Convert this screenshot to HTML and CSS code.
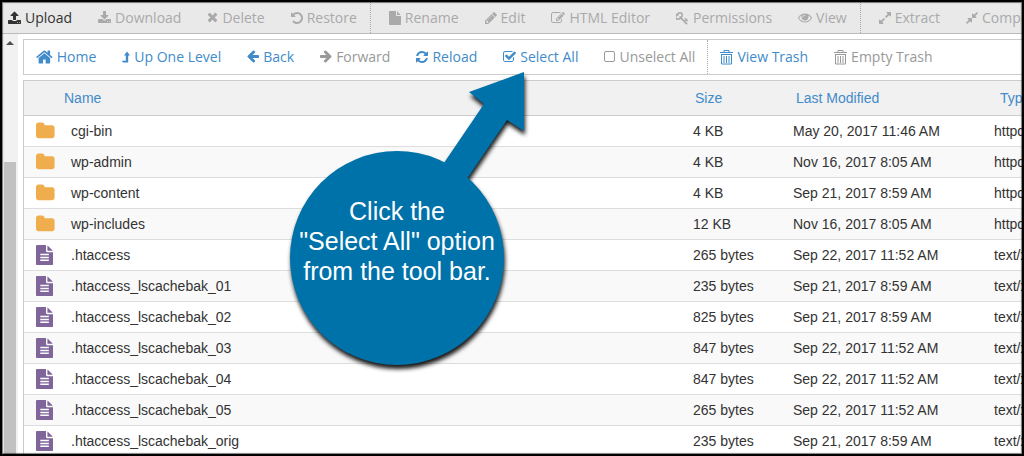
FILE: index.html
```html
<!DOCTYPE html>
<html lang="en">

<head>
    <meta charset="UTF-8">
    <meta name="viewport" content="width=device-width, initial-scale=1.0">
    <title>File Manager</title>
    <link rel="stylesheet" href="styles.css">
</head>

<body>
    <!-- shared icon shapes -->
    <svg class="sprite" aria-hidden="true">
        <path id="i-folder" d="M1728 608v704q0 92-66 158t-158 66h-1216q-92 0-158-66t-66-158v-960q0-92 66-158t158-66h320q92 0 158 66t66 158v32h672q92 0 158 66t66 158z"/>
        <path id="i-doc" d="M1596 476q14 14 28 36h-472v-472q22 14 36 28zm-476 164h544v1056q0 40-28 68t-68 28h-1344q-40 0-68-28t-28-68v-1600q0-40 28-68t68-28h800v544q0 40 28 68t68 28zM512 790v130h768v-130zM512 1050v130h768v-130zM512 1310v130h768v-130z"/>
        <path id="i-arrow" d="M1664 896v128q0 53-32.5 90.5t-84.5 37.5h-704l293 294q38 36 38 90t-38 90l-75 76q-37 37-90 37-52 0-91-37l-651-652q-37-37-37-90 0-52 37-91l651-650q38-38 91-38 52 0 90 38l75 74q38 38 38 91t-38 91l-293 293h704q52 0 84.5 37.5t32.5 90.5z"/>
        <g id="i-trash">
            <path d="M4 2V.5h5V2M0 2.5h13M1 4.5h11M1.500 4.500v9.500h10V4.500M4 6v7M6.500 6v7M9 6v7" fill="none" stroke="currentColor"/>
        </g>
    </svg>

    <nav class="actions">
        <div class="group">
            <button class="tool dark"><svg class="icon" viewBox="64 0 1664 1792"><path d="M1344 1472q0-26-19-45t-45-19-45 19-19 45 19 45 45 19 45-19 19-45zm256 0q0-26-19-45t-45-19-45 19-19 45 19 45 45 19 45-19 19-45zm128-224v320q0 40-28 68t-68 28h-1472q-40 0-68-28t-28-68v-320q0-40 28-68t68-28h427q21 56 70.5 92t110.5 36h256q61 0 110.5-36t70.5-92h427q40 0 68 28t28 68zm-325-648q-17 40-59 40h-256v448q0 26-19 45t-45 19h-256q-26 0-45-19t-19-45v-448h-256q-42 0-59-40-17-39 14-69l448-448q18-19 45-19t45 19l448 448q31 30 14 69z"/></svg>Upload</button>
            <button class="tool" disabled><svg class="icon" viewBox="64 0 1664 1792"><path d="M1344 1344q0-26-19-45t-45-19-45 19-19 45 19 45 45 19 45-19 19-45zm256 0q0-26-19-45t-45-19-45 19-19 45 19 45 45 19 45-19 19-45zm128-224v320q0 40-28 68t-68 28h-1472q-40 0-68-28t-28-68v-320q0-40 28-68t68-28h465l135 136q58 56 136 56t136-56l136-136h464q40 0 68 28t28 68zm-325-569q17 41-14 70l-448 448q-18 19-45 19t-45-19l-448-448q-31-29-14-70 17-39 59-39h256v-448q0-26 19-45t45-19h256q26 0 45 19t19 45v448h256q42 0 59 39z"/></svg>Download</button>
            <button class="tool" disabled><svg class="icon" viewBox="192 128 1408 1792"><path d="M1490 1322q0 40-28 68l-136 136q-28 28-68 28t-68-28l-294-294-294 294q-28 28-68 28t-68-28l-136-136q-28-28-28-68t28-68l294-294-294-294q-28-28-28-68t28-68l136-136q28-28 68-28t68 28l294 294 294-294q28-28 68-28t68 28l136 136q28 28 28 68t-28 68l-294 294 294 294q28 28 28 68z"/></svg>Delete</button>
            <button class="tool" disabled><svg class="icon" viewBox="128 0 1536 1792"><path d="M1664 896q0 156-61 298t-164 245-245 164-298 61q-172 0-327-72.5t-264-204.5q-7-10-6.500-22.500t8.500-20.500l137-138q10-9 25-9 16 2 23 12 73 95 179 147t225 52q104 0 198.500-40.500t163.500-109.500 109.500-163.500 40.500-198.500-40.500-198.500-109.500-163.500-163.500-109.500-198.500-40.500q-98 0-188 35.500t-160 101.500l137 138q31 30 14 69-17 40-59 40h-448q-26 0-45-19t-19-45v-448q0-42 40-59 39-17 69 14l130 129q107-101 244.500-156.500t284.500-55.500q156 0 298 61t245 164 164 245 61 298z"/></svg>Restore</button>
        </div>
        <div class="group">
            <button class="tool" disabled><svg class="icon" viewBox="128 0 1536 1792"><path d="M1152 512v-472q22 14 36 28l408 408q14 14 28 36h-472zm-128 32q0 40 28 68t68 28h544v1056q0 40-28 68t-68 28h-1344q-40 0-68-28t-28-68v-1600q0-40 28-68t68-28h800v544z"/></svg>Rename</button>
            <button class="tool" disabled><svg class="icon" viewBox="128 0 1536 1792"><path d="M491 1536l91-91-235-235-91 91v107h128v128h107zm523-928q0-22-22-22-10 0-17 7l-542 542q-7 7-7 17 0 22 22 22 10 0 17-7l542-542q7-7 7-17zm-54-192l416 416-832 832h-416v-416zm683 96q0 53-37 90l-166 166-416-416 166-165q36-38 90-38 53 0 91 38l235 234q37 39 37 91z"/></svg>Edit</button>
            <button class="tool" disabled><svg class="icon" viewBox="0 0 1792 1792"><path d="M888 1184l116-116-152-152-116 116v56h96v96h56zm440-720q-16-16-33 1l-350 350q-17 17-1 33t33-1l350-350q17-17 1-33zm80 594v190q0 119-84.5 203.5t-203.5 84.5h-832q-119 0-203.5-84.5t-84.5-203.5v-832q0-119 84.5-203.5t203.5-84.5h832q63 0 117 25 15 7 18 23 3 17-9 29l-49 49q-14 14-32 8-23-6-45-6h-832q-66 0-113 47t-47 113v832q0 66 47 113t113 47h832q66 0 113-47t47-113v-126q0-13 9-22l64-64q15-15 35-7t20 29zm-96-738l288 288-672 672h-288v-288zm444 132l-92 92-288-288 92-92q28-28 68-28t68 28l152 152q28 28 28 68t-28 68z"/></svg>HTML Editor</button>
            <button class="tool" disabled><svg class="icon" viewBox="128 0 1664 1792"><path d="M832 512q0-80-56-136t-136-56-136 56-56 136q0 42 19 83-41-19-83-19-80 0-136 56t-56 136 56 136 136 56 136-56 56-136q0-42-19-83 41 19 83 19 80 0 136-56t56-136zm851 704q0 17-49 66t-66 49q-9 0-28.5-16t-36.5-33-38.5-40-24.5-26l-96 96 220 220q28 28 28 68 0 42-39 81t-81 39q-40 0-68-28l-671-671q-176 131-365 131-163 0-265.5-102.5t-102.5-265.5q0-160 95-313t248-248 313-95q163 0 265.5 102.5t102.5 265.5q0 189-131 365l355 355 96-96q-3-3-26-24.5t-40-38.5-33-36.5-16-28.5q0-17 49-66t66-49q13 0 23 10 6 6 46 44.5t82 79.5 86.5 86 73 78 28.5 41z"/></svg>Permissions</button>
            <button class="tool" disabled><svg class="icon" viewBox="0 64 1792 1792"><path d="M1664 960q-152-236-381-353 61 104 61 225 0 185-131.5 316.5t-316.5 131.5-316.5-131.5-131.5-316.5q0-121 61-225-229 117-381 353 133 205 333.5 326.5t434.5 121.5 434.5-121.5 333.5-326.5zm-720-384q0-20-14-34t-34-14q-125 0-214.5 89.5t-89.5 214.5q0 20 14 34t34 14 34-14 14-34q0-86 61-147t147-61q20 0 34-14t14-34zm848 384q0 34-20 69-140 230-376.5 368.5t-499.5 138.5-499.5-139-376.5-368q-20-35-20-69t20-69q140-229 376.5-368t499.5-139 499.5 139 376.5 368q20 35 20 69z"/></svg>View</button>
        </div>
        <div class="group">
            <button class="tool" disabled><svg class="icon" viewBox="128 0 1536 1792"><path d="M883 1056q0 13-10 23l-332 332 144 144q19 19 19 45t-19 45-45 19h-448q-26 0-45-19t-19-45v-448q0-26 19-45t45-19 45 19l144 144 332-332q10-10 23-10t23 10l114 114q10 10 10 23zm781-864v448q0 26-19 45t-45 19-45-19l-144-144-332 332q-10 10-23 10t-23-10l-114-114q-10-10-10-23t10-23l332-332-144-144q-19-19-19-45t19-45 45-19h448q26 0 45 19t19 45z"/></svg>Extract</button>
            <button class="tool" disabled><svg class="icon" viewBox="128 0 1536 1792"><path d="M896 960v448q0 26-19 45t-45 19-45-19l-144-144-332 332q-10 10-23 10t-23-10l-114-114q-10-10-10-23t10-23l332-332-144-144q-19-19-19-45t19-45 45-19h448q26 0 45 19t19 45zm755-672q0 13-10 23l-332 332 144 144q19 19 19 45t-19 45-45 19h-448q-26 0-45-19t-19-45v-448q0-26 19-45t45-19 45 19l144 144 332-332q10-10 23-10t23 10l114 114q10 10 10 23z"/></svg>Compress</button>
        </div>
    </nav>

    <div class="main">
        <div class="scrollbar">
            <div class="scroll-up"></div>
            <div class="thumb"></div>
        </div>

        <div class="content">
            <nav class="toolbar">
                <div class="group">
                    <button class="tool blue"><svg class="icon big" viewBox="64 0 1664 1792"><path d="M1472 992v480q0 26-19 45t-45 19h-384v-384h-256v384h-384q-26 0-45-19t-19-45v-480q0-1 .5-3t.5-3l575-474 575 474q1 2 1 6zm223-69l-62 74q-8 9-21 11h-3q-13 0-21-7l-692-577-692 577q-12 8-24 7-13-2-21-11l-62-74q-8-10-7-23.5t11-21.5l719-599q32-26 76-26t76 26l244 204v-195q0-14 9-23t23-9h192q14 0 23 9t9 23v408l219 182q10 8 11 21.5t-7 23.5z"/></svg>Home</button>
                    <button class="tool blue"><svg class="icon" viewBox="0 0 8 14"><path d="M5 1.500L8 5.500H6.200V12.500H.8L0 10.800H3.800V5.500H2z"/></svg>Up One Level</button>
                    <button class="tool blue"><svg class="icon" viewBox="128 128 1536 1792"><use href="#i-arrow"/></svg>Back</button>
                    <button class="tool" disabled><svg class="icon flip" viewBox="128 128 1536 1792"><use href="#i-arrow"/></svg>Forward</button>
                    <button class="tool blue"><svg class="icon" viewBox="128 0 1536 1792"><path d="M1639 1056q0 5-1 7-64 268-268 434.5t-478 166.500q-146 0-282.500-55t-243.500-157l-129 129q-19 19-45 19t-45-19-19-45v-448q0-26 19-45t45-19h448q26 0 45 19t19 45-19 45l-137 137q71 66 161 102t187 36q134 0 250-65t186-179q11-17 53-117 8-23 30-23h192q13 0 22.500 9.500t9.500 22.500zm25-800v448q0 26-19 45t-45 19h-448q-26 0-45-19t-19-45 19-45l138-138q-148-137-349-137-134 0-250 65t-186 179q-11 17-53 117-8 23-30 23h-199q-13 0-22.500-9.500t-9.500-22.500v-7q65-268 270-434.500t480-166.500q146 0 284 55.500t245 156.500l130-129q19-19 45-19t45 19 19 45z"/></svg>Reload</button>
                    <button class="tool blue"><svg class="icon" viewBox="64 0 1664 1792"><path d="M1472 930v318q0 119-84.5 203.5t-203.5 84.5h-832q-119 0-203.5-84.5t-84.5-203.5v-832q0-119 84.5-203.5t203.5-84.5h832q63 0 117 25 15 7 18 23 3 17-9 29l-49 49q-10 10-23 10-3 0-9-2-23-6-45-6h-832q-66 0-113 47t-47 113v832q0 66 47 113t113 47h832q66 0 113-47t47-113v-254q0-13 9-22l64-64q10-10 23-10 6 0 12 3 20 8 20 29zm231-489l-814 814q-24 24-57 24t-57-24l-430-430q-24-24-24-57t24-57l110-110q24-24 57-24t57 24l263 263 647-647q24-24 57-24t57 24l110 110q24 24 24 57t-24 57z"/></svg>Select All</button>
                    <button class="tool" disabled><svg class="icon" viewBox="0 0 11 14"><rect x=".5" y="1.500" width="10" height="10" rx="1.500" fill="none" stroke="currentColor"/></svg>Unselect All</button>
                </div>
                <div class="group">
                    <button class="tool blue"><svg class="icon trash" viewBox="0 0 13 15"><use href="#i-trash"/></svg>View Trash</button>
                    <button class="tool" disabled><svg class="icon trash" viewBox="0 0 13 15"><use href="#i-trash"/></svg>Empty Trash</button>
                </div>
            </nav>

            <table class="files">
                <thead>
                    <tr><th class="col-icon"></th><th class="col-name">Name</th><th class="col-size">Size</th><th class="col-date">Last Modified</th><th class="col-type">Type</th></tr>
                </thead>
                <tbody>
                    <tr><td><svg class="file-icon folder" viewBox="64 0 1664 1792"><use href="#i-folder"/></svg></td><td class="name">cgi-bin</td><td>4 KB</td><td>May 20, 2017 11:46 AM</td><td>httpd/unix-directory</td></tr>
                    <tr><td><svg class="file-icon folder" viewBox="64 0 1664 1792"><use href="#i-folder"/></svg></td><td class="name">wp-admin</td><td>4 KB</td><td>Nov 16, 2017 8:05 AM</td><td>httpd/unix-directory</td></tr>
                    <tr><td><svg class="file-icon folder" viewBox="64 0 1664 1792"><use href="#i-folder"/></svg></td><td class="name">wp-content</td><td>4 KB</td><td>Sep 21, 2017 8:59 AM</td><td>httpd/unix-directory</td></tr>
                    <tr><td><svg class="file-icon folder" viewBox="64 0 1664 1792"><use href="#i-folder"/></svg></td><td class="name">wp-includes</td><td>12 KB</td><td>Nov 16, 2017 8:05 AM</td><td>httpd/unix-directory</td></tr>
                    <tr><td><svg class="file-icon doc" viewBox="128 0 1536 1792"><use href="#i-doc"/></svg></td><td class="name">.htaccess</td><td>265 bytes</td><td>Sep 22, 2017 11:52 AM</td><td>text/x-generic</td></tr>
                    <tr><td><svg class="file-icon doc" viewBox="128 0 1536 1792"><use href="#i-doc"/></svg></td><td class="name">.htaccess_lscachebak_01</td><td>235 bytes</td><td>Sep 21, 2017 8:59 AM</td><td>text/x-generic</td></tr>
                    <tr><td><svg class="file-icon doc" viewBox="128 0 1536 1792"><use href="#i-doc"/></svg></td><td class="name">.htaccess_lscachebak_02</td><td>825 bytes</td><td>Sep 21, 2017 8:59 AM</td><td>text/x-generic</td></tr>
                    <tr><td><svg class="file-icon doc" viewBox="128 0 1536 1792"><use href="#i-doc"/></svg></td><td class="name">.htaccess_lscachebak_03</td><td>847 bytes</td><td>Sep 22, 2017 11:52 AM</td><td>text/x-generic</td></tr>
                    <tr><td><svg class="file-icon doc" viewBox="128 0 1536 1792"><use href="#i-doc"/></svg></td><td class="name">.htaccess_lscachebak_04</td><td>847 bytes</td><td>Sep 22, 2017 11:52 AM</td><td>text/x-generic</td></tr>
                    <tr><td><svg class="file-icon doc" viewBox="128 0 1536 1792"><use href="#i-doc"/></svg></td><td class="name">.htaccess_lscachebak_05</td><td>265 bytes</td><td>Sep 22, 2017 11:52 AM</td><td>text/x-generic</td></tr>
                    <tr><td><svg class="file-icon doc" viewBox="128 0 1536 1792"><use href="#i-doc"/></svg></td><td class="name">.htaccess_lscachebak_orig</td><td>235 bytes</td><td>Sep 21, 2017 8:59 AM</td><td>text/x-generic</td></tr>
                </tbody>
            </table>
        </div>
    </div>

    <div class="callout">
        <svg class="callout-shape" viewBox="0 0 236 294">
            <circle cx="108" cy="186" r="107"/>
            <path d="M235 0L180 20 195 32 142 110 169 120 218 48 235 59z"/>
        </svg>
        <p class="callout-text">Click the<br>"Select All" option<br>from the tool bar.</p>
    </div>
</body>

</html>
```

FILE: styles.css
```css
* {
    box-sizing: border-box;
}

body {
    display: flex;
    flex-direction: column;
    position: relative;
    height: 100vh;
    margin: 0;
    border: 2px solid #000;
    overflow: hidden;
    background: #fff;
    color: #333;
    font-family: "Liberation Sans", Arial, sans-serif;
    font-size: 14px;
}

/* soft inner edge of the black frame */
body::after {
    content: "";
    position: absolute;
    inset: 0;
    box-shadow: inset 0 0 1px 1px rgba(0, 0, 0, 0.5);
    pointer-events: none;
}

.sprite {
    position: absolute;
    width: 0;
    height: 0;
}

.actions,
.toolbar {
    display: flex;
    flex-shrink: 0;
    overflow: hidden;
}

.actions {
    height: 32px;
    background: #e9e9e9;
    border-bottom: 1px solid #bbb;
}

.group {
    display: flex;
    flex-shrink: 0;
    gap: 26px;
    padding: 0 13px 0 18px;
    border-right: 1px dotted #aaa;
}

.group:first-child {
    padding-left: 6px;
}

.group:last-child {
    border-right: none;
}

.tool {
    display: flex;
    align-items: center;
    flex-shrink: 0;
    gap: 4px;
    padding: 0;
    border: none;
    background: none;
    color: #999;
    font-family: "Open Sans", sans-serif;
    font-size: 14px;
    line-height: 20px;
    white-space: nowrap;
}

.actions .tool {
    color: #aaa;
}

.actions .dark {
    color: #333;
}

.blue {
    color: #428bca;
    cursor: pointer;
}

.icon {
    width: auto;
    height: 14px;
    fill: currentColor;
}

.icon.big {
    height: 18px;
}

.icon.trash {
    height: 15px;
}

.flip {
    transform: scaleX(-1);
}

.main {
    display: flex;
    flex: 1;
    min-height: 0;
}

.scrollbar {
    flex: 0 0 16px;
    display: flex;
    flex-direction: column;
    align-items: center;
    background: #f1f1f1;
}

.scroll-up {
    margin-top: 7px;
    border: 4px solid transparent;
    border-top: none;
    border-bottom-color: #505050;
}

.thumb {
    flex: 1;
    width: 12px;
    margin-top: 117px;
    background: #c1c1c1;
}

.content {
    flex: 1;
    min-width: 0;
    padding: 5px 0 0 5px;
    overflow: hidden;
}

.toolbar {
    height: 36px;
    margin-bottom: 5px;
    border: 1px solid #ccc;
    border-right: none;
}

.toolbar .group {
    padding: 0 12px;
}

.files {
    width: 100%;
    table-layout: fixed;
    border-collapse: separate;
    border-spacing: 0;
    border-top: 1px solid #ccc;
    border-left: 1px solid #ccc;
    white-space: nowrap;
}

.files th {
    height: 35px;
    padding: 0 11px;
    background: #f1f1f1;
    border-bottom: 1px solid #ccc;
    color: #428bca;
    font-weight: normal;
    text-align: left;
}

.files td {
    height: 31px;
    padding: 0 8px;
    border-bottom: 1px solid #ddd;
}

.files tbody tr:nth-child(even) {
    background: #f9f9f9;
}

.files td:first-child {
    padding: 0 0 0 12px;
}

.files td.name {
    padding-left: 17px;
}

.files th.col-name,
.files th.col-size {
    padding-left: 10px;
}

.col-icon {
    width: 30px;
}

.col-size {
    width: 100px;
}

.col-date {
    width: 201px;
}

.col-type {
    width: 36px;
}

.files th.col-type {
    padding-left: 14px;
}

.file-icon {
    display: block;
    width: auto;
    height: 20px;
}

.folder {
    fill: #f0ad4e;
}

.doc {
    fill: #7f6599;
}

.callout {
    position: absolute;
    top: 70px;
    left: 287px;
    width: 236px;
}

.callout-shape {
    display: block;
    width: 100%;
    overflow: visible;
    fill: #0072aa;
    filter: drop-shadow(1px 4px 2px rgba(0, 0, 0, 0.9));
}

.callout-text {
    position: absolute;
    top: 124px;
    left: 0;
    width: 216px;
    margin: 0;
    color: #fff;
    font-size: 25px;
    line-height: 30px;
    text-align: center;
    white-space: nowrap;
}
```
